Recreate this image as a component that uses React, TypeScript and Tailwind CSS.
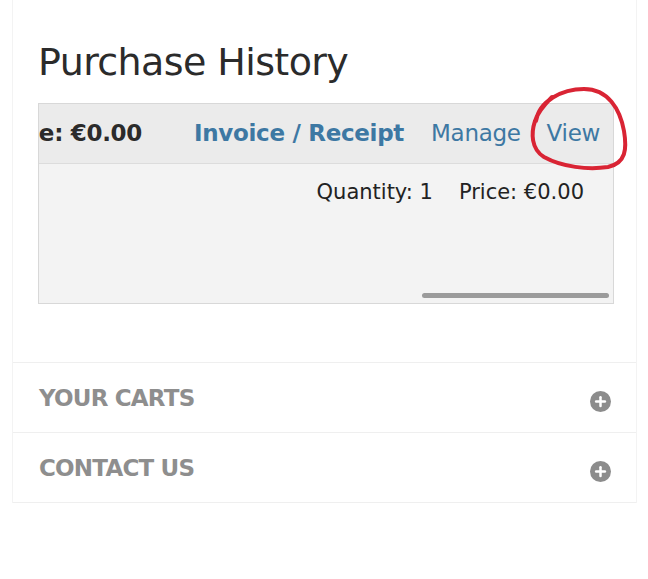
import { Plus } from "lucide-react";

const font = { fontFamily: '"DejaVu Sans", "Liberation Sans", sans-serif' };

const sections = ["YOUR CARTS", "CONTACT US"];

export default function App() {
  return (
    <div className="w-[648px] h-[579px] bg-white overflow-hidden" style={font}>
      <div className="ml-[12px] w-[625px] border-x border-[#f3f3f3]">
        {/* Purchase History */}
        <div className="pl-[25px] pr-[24px] pt-[38px] pb-[58px]">
          <h1 className="text-[38px] leading-[48px] text-[#2b2b2b] tracking-[-0.6px] mb-[17px]">
            Purchase History
          </h1>

          <div className="relative w-[576px] border border-[#d8d8d8]">
            <div className="overflow-hidden">
              {/* header row */}
              <div className="h-[60px] bg-[#ebebeb] border-b border-[#dcdcdc] flex items-center justify-end whitespace-nowrap pr-[13px] pt-[-2px] text-[23px] tracking-[-0.3px]">
                <span className="font-bold text-[#2b2b2b] mr-[52px]">Total Price: €0.00</span>
                <span className="font-bold text-[#3d78a3] mr-[27px]">Invoice / Receipt</span>
                <span className="text-[#3d78a3] mr-[26px]">Manage</span>
                <span className="text-[#3d78a3]">View</span>
              </div>
              {/* item row */}
              <div className="h-[139px] bg-[#f3f3f3] flex flex-col">
                <div className="flex justify-end pr-[29px] pt-[13px] text-[21px] text-[#222] whitespace-nowrap">
                  <span className="mr-[26px]">Quantity: 1</span>
                  <span>Price: €0.00</span>
                </div>
                <div className="mt-auto mb-[5px] flex justify-end pr-[4px]">
                  <div className="w-[187px] h-[5px] rounded-full bg-[#9b9b9b]" />
                </div>
              </div>
            </div>

            {/* hand-drawn annotation */}
            <svg
              className="absolute left-[483px] top-[-23px] pointer-events-none"
              width="115"
              height="95"
              viewBox="0 0 115 95"
              fill="none"
            >
              <path
                d="M14 40 C17 20 40 8 62 8 C86 8 98 28 102 50 C105 68 104 82 86 86 C66 89 40 86 22 76 C9 68 9 52 13 40 C16 30 24 22 30 16"
                stroke="#d92434"
                strokeWidth="4"
                strokeLinecap="round"
              />
            </svg>
          </div>
        </div>

        {/* accordion sections */}
        <div className="border-t border-[#efefef]">
          {sections.map((label) => (
            <div
              key={label}
              className="h-[70px] flex items-center justify-between pl-[26px] pr-[25px] border-b border-[#efefef]"
            >
              <span className="text-[23px] font-bold text-[#8e8e8e] tracking-[-0.8px] mt-[2px]">{label}</span>
              <span className="w-[21px] h-[21px] mt-[7px] rounded-full bg-[#8c8c8c] flex items-center justify-center">
                <Plus size={15} strokeWidth={4} className="text-white" />
              </span>
            </div>
          ))}
        </div>
      </div>
    </div>
  );
}
